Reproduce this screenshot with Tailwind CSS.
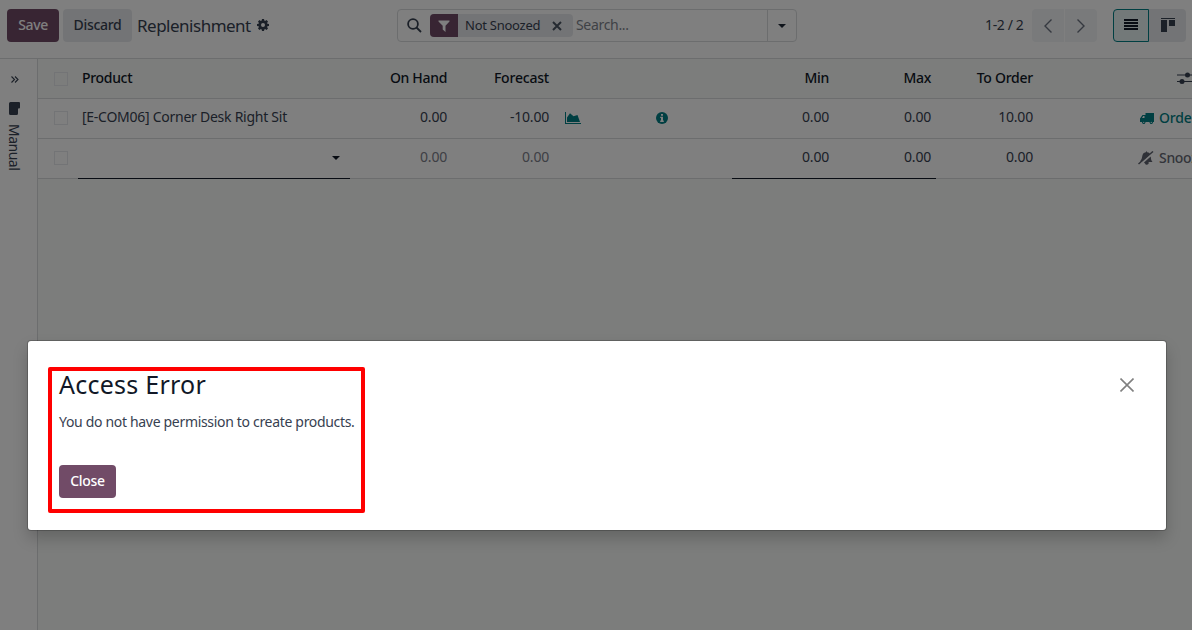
<!DOCTYPE html>
<html lang="en">
<head>
<meta charset="utf-8">
<title>Replenishment</title>
<script src="https://cdn.jsdelivr.net/npm/@tailwindcss/browser@4"></script>
</head>
<body class="relative h-[630px] w-[1192px] overflow-hidden bg-white font-['Noto_Sans',sans-serif] text-[14px] leading-[21px] tracking-[-0.32px] text-[#374151]">
<header class="flex h-[59px] items-start border-b border-[#d8dadd] pt-[9px] pl-[7px]">
  <button class="h-[33px] w-[52px] rounded bg-[#714b67] pb-[2px] font-medium tracking-[-0.38px] text-white">Save</button>
  <button class="ml-1 h-[33px] w-[69px] rounded bg-[#e7e9ed] pb-[2px] font-medium">Discard</button>
  <div class="ml-[5px] flex h-[33px] w-[260px] items-center gap-[7px] text-[17px] tracking-[-0.5px]">
    <span class="w-[113px] whitespace-nowrap">Replenishment</span>
    <svg class="-mt-[2px] size-3" viewBox="0 0 12 12" fill="#374151"><path fill-rule="evenodd" d="M5 0h2l.35 1.6.7.3L9.5 1 11 2.5l-.9 1.4.3.75L12 5v2l-1.6.35-.3.75.9 1.4L9.500 11l-1.400-.9-.75.3L7 12H5l-.35-1.600-.75-.3L2.500 11 1 9.500l.9-1.400-.3-.75L0 7V5l1.600-.35.3-.75L1 2.500 2.500 1l1.400.9.75-.3zM6 4a2 2 0 1 0 0 4 2 2 0 0 0 0-4z"/></svg>
  </div>
  <div class="flex h-[33px] w-[400px] items-center rounded border border-[#d8dadd]">
    <svg class="ml-[9px] size-[15px]" viewBox="0 0 15 15" fill="none" stroke="#374151" stroke-width="1.800"><circle cx="6" cy="6" r="4.900"/><path d="M9.500 9.500L14 14"/></svg>
    <div class="ml-2 flex h-[23px] w-[143px] items-center overflow-hidden rounded bg-[#e7e9ed] text-[13px]">
      <span class="flex h-full w-7 items-center justify-center bg-[#714b67]"><svg class="h-3 w-3" viewBox="0 0 12 12" fill="#fff"><path d="M.5.500h11v1L7.500 5.700V12L4.700 9.500V5.700L.5 1.500z"/></svg></span>
      <span class="ml-[7px] w-[87px] whitespace-nowrap tracking-[-0.25px]">Not Snoozed</span>
      <svg class="mt-px size-[10px]" viewBox="0 0 10 10" stroke="#4b5563" stroke-width="2"><path d="M1 1l8 8M9 1l-8 8"/></svg>
    </div>
    <span class="ml-[3px] flex-1 pb-[2px] text-[#7f848d]">Search...</span>
    <span class="flex h-full w-[29px] items-center justify-center border-l border-[#d8dadd]"><svg class="h-1 w-2" viewBox="0 0 8 4" fill="#1f2937"><path d="M0 0h8L4 4z"/></svg></span>
  </div>
  <span class="ml-[188px] w-[47px] whitespace-nowrap pt-[5px] tracking-[-0.38px]">1-2 / 2</span>
  <button class="flex h-[33px] w-8 items-center justify-center rounded-l bg-[#f3f4f6]"><svg class="h-[14px] w-2" viewBox="0 0 8 14" fill="none" stroke="#6b7280" stroke-width="1.400"><path d="M7.500.500L1 7l6.500 6.500"/></svg></button>
  <button class="ml-px flex h-[33px] w-8 items-center justify-center rounded-r bg-[#f3f4f6]"><svg class="h-[14px] w-2" viewBox="0 0 8 14" fill="none" stroke="#6b7280" stroke-width="1.400"><path d="M.5.500L7 7 .5 13.500"/></svg></button>
  <button class="ml-4 flex h-[33px] w-9 items-center justify-center rounded-l border border-[#017e84] bg-[#e6f2f3]"><svg class="-mt-[2px] h-[11px] w-[14px]" viewBox="0 0 14 11" fill="#111827"><path d="M0 0h14v2H0zM0 3h14v2H0zM0 6h14v2H0zM0 9h14v2H0z"/></svg></button>
  <button class="flex h-[33px] w-[37px] items-center justify-center rounded-r bg-[#e7e9ed]"><svg class="-mt-px h-[14px] w-[14px]" viewBox="0 0 14 14" fill="#374151"><path d="M0 0h14v1H0zM0 2h6v12H0zM8 2h6v6H8z"/></svg></button>
</header>
<main class="flex h-[571px]">
  <aside class="flex w-[38px] shrink-0 flex-col items-start border-r border-[#d8dadd] pl-[9px]">
    <svg class="mt-[17px] ml-[2px] h-[7px] w-[8px]" viewBox="0 0 8 7" fill="none" stroke="#374151" stroke-width="1.100"><path d="M.5.500l3 3-3 3M4 .500l3 3-3 3"/></svg>
    <svg class="mt-[19px] h-[13px] w-[11px]" viewBox="0 0 11 13" fill="#374151"><path d="M1.500 0H10q1 0 1 1v4.500q0 1-1 1H9V11.500q0 1.500-1.500 1.500h-6Q0 13 0 11.500v-10Q0 0 1.500 0z"/></svg>
    <span class="mt-[9px] -ml-[5px] h-[50px] tracking-[-0.5px] [writing-mode:vertical-rl]">Manual</span>
  </aside>
  <section class="w-[1154px] overflow-hidden bg-[#f8fbf9]">
    <div class="flex h-10 items-center border-b border-[#d8dadd] font-medium whitespace-nowrap text-[#111827] *:shrink-0">
      <i class="ml-4 size-[14px] border border-[#e7e9ed]"></i>
      <span class="ml-[14px] w-[190px] pb-[2px]">Product</span>
      <span class="w-[175px] pb-[2px] text-right">On Hand</span>
      <span class="w-[102px] pb-[2px] text-right tracking-[-0.2px]">Forecast</span>
      <span class="w-[280px] pb-[2px] text-right">Min</span>
      <span class="w-[102px] pb-[2px] text-right">Max</span>
      <span class="w-[102px] pb-[2px] text-right tracking-[-0.25px]">To Order</span>
      <svg class="-mt-px ml-[144px] h-3 w-4" viewBox="0 0 16 12" fill="#374151"><path d="M0 2.500h16v1H0zM0 9h16v1H0z"/><circle cx="10.500" cy="3" r="2.500"/><circle cx="5" cy="9.500" r="2.500"/></svg>
    </div>
    <div class="flex h-10 items-center border-b border-[#d8dadd] bg-white whitespace-nowrap *:shrink-0">
      <i class="-mt-[2px] ml-4 size-[14px] border border-[#e7e9ed]"></i>
      <span class="ml-[14px] w-[230px] pb-[4px] tracking-[-0.26px]">[E-COM06] Corner Desk Right Sit</span>
      <span class="w-[135px] pb-[4px] text-right tracking-[-0.2px]">0.00</span>
      <span class="w-[102px] pb-[4px] text-right tracking-[-0.2px]">-10.00</span>
      <svg class="-mt-px ml-4 h-3 w-4" viewBox="0 0 16 12" fill="#017e84"><path d="M0 0h1v11h15v1H0zM2 10V5.500L5 1.200l3.500 3L12.500 3 15 10z"/></svg>
      <svg class="-mt-px ml-[75px] size-3" viewBox="0 0 12 12"><circle cx="6" cy="6" r="6" fill="#017e84"/><path d="M5 2h2v1.700H5zM4.200 4.700H7v3.800h.8V10H4.200V8.500H5V6h-.8z" fill="#fff"/></svg>
      <span class="w-[161px] pb-[4px] text-right tracking-[-0.2px]">0.00</span>
      <span class="w-[102px] pb-[4px] text-right tracking-[-0.2px]">0.00</span>
      <span class="w-[102px] pb-[4px] text-right tracking-[-0.2px]">10.00</span>
      <svg class="ml-[107px] h-[11px] w-[14px]" viewBox="0 0 14 11" fill="#017e84"><path fill-rule="evenodd" d="M5.500 0H14v9h-1a1.800 1.800 0 0 1-3.500 0h-4A1.800 1.800 0 0 1 2 9H0V5.500L2.500 2h3zM2 5h2.500V3H3.200z"/><circle cx="3.750" cy="9.400" r="1.500"/><circle cx="11.250" cy="9.400" r="1.500"/><circle cx="3.750" cy="9.400" r=".6" fill="#fff"/><circle cx="11.250" cy="9.400" r=".6" fill="#fff"/></svg>
      <span class="ml-[5px] pb-[2px] font-medium tracking-[-0.2px] text-[#017e84]">Order</span>
    </div>
    <div class="relative flex h-10 items-center border-b border-[#d8dadd] bg-white whitespace-nowrap *:shrink-0">
      <i class="-mt-[2px] ml-4 size-[14px] border border-[#e7e9ed]"></i>
      <svg class="-mt-px ml-[264px] h-1 w-2" viewBox="0 0 8 4" fill="#111827"><path d="M0 0h8L4 4z"/></svg>
      <span class="w-[107px] pb-[4px] text-right tracking-[-0.2px] text-[#7c808a]">0.00</span>
      <span class="w-[102px] pb-[4px] text-right tracking-[-0.2px] text-[#7c808a]">0.00</span>
      <span class="w-[280px] pb-[4px] text-right tracking-[-0.2px]">0.00</span>
      <span class="w-[102px] pb-[4px] text-right tracking-[-0.2px]">0.00</span>
      <span class="w-[102px] pb-[4px] text-right tracking-[-0.2px]">0.00</span>
      <svg class="-mt-px ml-[105px] h-[14px] w-4" viewBox="0 0 16 14" fill="#5f636f"><path d="M8.500 0l.7 1.200Q11.500 1.500 12 3L4 10.500H2Q4 8.500 4.200 5.500 4.500 1.800 7.800 1.200zM12.700 5.500Q12.800 9 14.500 11H10.500a1.800 1.800 0 0 1-3.500 1.500L6 11.500z"/><path d="M.5 13L15 .5" stroke="#5f636f" stroke-width="1.500"/><path d="M3 12.500L14.500 2.500" stroke="#fff" stroke-width=".5"/></svg>
      <span class="ml-[5px] pb-[2px] font-medium text-[#666a75]">Snooze</span>
      <i class="absolute -bottom-px left-10 h-px w-[272px] bg-[#111827]"></i>
      <i class="absolute -bottom-px left-[694px] h-px w-[204px] bg-[#111827]"></i>
    </div>
  </section>
</main>
<div class="absolute inset-0 bg-black/50"></div>
<div role="dialog" class="absolute top-[341px] left-[28px] h-[189px] w-[1138px] rounded-[3px] bg-white shadow-[0_0_0_1px_rgba(0,0,0,0.2),0_8px_16px_rgba(0,0,0,0.2)]">
  <div class="flex justify-between pt-[25px] pl-[31px] pr-[32px]">
    <h4 class="text-[25px] leading-[36px] tracking-[0.25px] whitespace-nowrap text-[#111827]">Access Error</h4>
    <svg class="mt-[12px] size-[14px]" viewBox="0 0 14 14" stroke="#808080" stroke-width="1.600"><path d="M.5.500l13 13M13.500.500l-13 13"/></svg>
  </div>
  <p class="mt-[9px] pl-[31px] whitespace-nowrap">You do not have permission to create products.</p>
  <button class="mt-[33px] ml-[31px] h-[33px] w-[57px] rounded bg-[#714b67] pb-[2px] font-medium text-white">Close</button>
  <div class="absolute top-[26px] left-5 h-[146px] w-[317px] rounded-[2px] border-4 border-[#ff0000]"></div>
</div>
</body>
</html>
